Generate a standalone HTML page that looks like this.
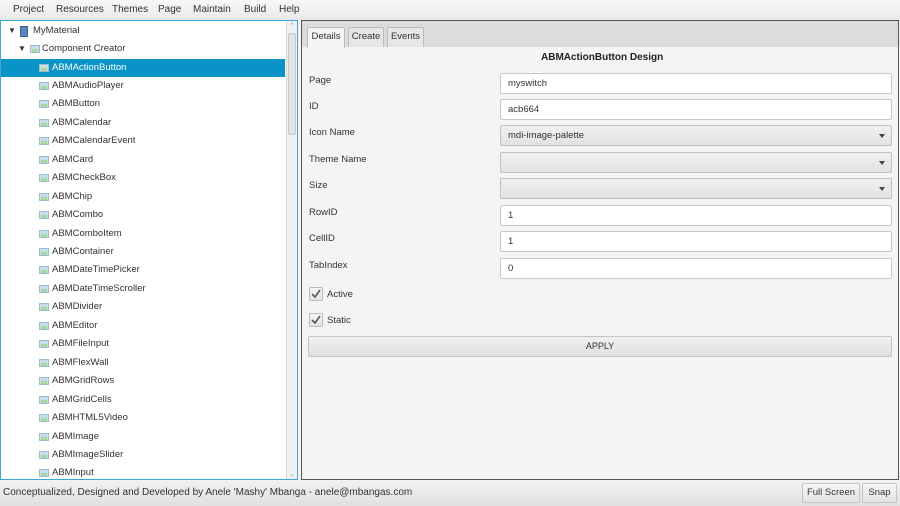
<!DOCTYPE html>
<html><head><meta charset="utf-8"><style>
*{box-sizing:border-box;margin:0;padding:0}
body{width:900px;height:506px;overflow:hidden;background:#f4f4f4;font-family:"Liberation Sans",sans-serif;font-size:10px;color:#333;position:relative}
.menu{position:absolute;left:0;top:0;width:900px;height:20px;background:linear-gradient(#f8f8f8,#e8e8e8);}
.menu span{position:absolute;top:4px;font-size:10px;color:#333}
.left{position:absolute;left:0;top:20px;width:298px;height:460px;background:#fff;border:1px solid #3ea8d8}
.row{position:absolute;left:0;width:284px;height:18px;line-height:18px;font-size:9.5px;color:#333}
.row.sel{background:#0993c6;color:#fff}
.ic{position:absolute;top:5px;width:10px;height:8px;background:#c7dde8;border:1px solid #9bbdd0}
.ic:after{content:"";position:absolute;left:1px;top:3px;width:6px;height:3px;background:#a8d8a0}
.sb{position:absolute;left:285px;top:0;width:11px;height:458px;background:#f0f0f0;border-left:1px solid #ddd}
.thumb{position:absolute;left:1px;top:12px;width:8px;height:102px;background:#e4e4e4;border:1px solid #c8c8c8;border-radius:2px}
.right{position:absolute;left:301px;top:20px;width:598px;height:460px;border:1px solid #555;background:#f4f4f4}
.tabbar{position:absolute;left:0;top:0;width:596px;height:26px;background:#dcdcdc}
.tab{position:absolute;top:6px;height:20px;border:1px solid #bbb;border-bottom:none;background:#e6e6e6;font-size:9.5px;line-height:18px;text-align:center;border-radius:2px 2px 0 0}
.lbl{position:absolute;left:7px;font-size:9.5px}
.inp{position:absolute;left:198px;width:392px;height:21px;background:#fff;border:1px solid #c8c8c8;border-radius:2px;font-size:9.5px;line-height:19px;padding-left:7px}
.cmb{background:linear-gradient(#f0f0f0,#e2e2e2);border-color:#c0c0c0}
.cmb:after{content:"";position:absolute;right:6px;top:8px;border-left:3.5px solid transparent;border-right:3.5px solid transparent;border-top:4px solid #444}
.chk{position:absolute;left:7px;width:14px;height:14px;border:1px solid #bbb;border-radius:2px;background:linear-gradient(#f4f4f4,#e4e4e4)}
.status{position:absolute;left:0;top:480px;width:900px;height:26px;background:linear-gradient(#f2f2f2,#e0e0e0)}
.btn{position:absolute;top:483px;height:20px;border:1px solid #c4c4c4;border-radius:2px;background:linear-gradient(#f6f6f6,#e4e4e4);font-size:9.5px;line-height:18px;text-align:center}
</style></head><body>
<div class="menu">
<span style="left:13px">Project</span><span style="left:56px">Resources</span><span style="left:112px">Themes</span><span style="left:158px">Page</span><span style="left:193px">Maintain</span><span style="left:244px">Build</span><span style="left:279px">Help</span>
</div>
<div class="left">
<div class="row" style="top:1px"><span style="position:absolute;left:7px;font-size:8px">▼</span><div style="position:absolute;left:19px;top:4px;width:8px;height:11px;background:#5c86b8;border:1px solid #3b6394"></div><span style="position:absolute;left:32px">MyMaterial</span></div>
<div class="row" style="top:19px"><span style="position:absolute;left:17px;font-size:8px">▼</span><div class="ic" style="left:29px"></div><span style="position:absolute;left:41px">Component Creator</span></div>
<div id="items"></div>
<div class="sb"><div style="position:absolute;top:1px;left:2px;font-size:7px;color:#999">⌃</div><div class="thumb"></div><div style="position:absolute;bottom:1px;left:2px;font-size:7px;color:#999">⌄</div></div>
</div>
<div class="right">
<div class="tabbar"></div>
<div class="tab" style="left:5px;width:38px;background:#f4f4f4;height:21px">Details</div>
<div class="tab" style="left:46px;width:36px">Create</div>
<div class="tab" style="left:85px;width:37px">Events</div>
<div style="position:absolute;left:239px;top:31px;font-weight:bold;font-size:10px;color:#222">ABMActionButton Design</div>
<div class="lbl" style="top:54px">Page</div><div class="inp" style="top:52px">myswitch</div>
<div class="lbl" style="top:80px">ID</div><div class="inp" style="top:78px">acb664</div>
<div class="lbl" style="top:106px">Icon Name</div><div class="inp cmb" style="top:104px">mdi-image-palette</div>
<div class="lbl" style="top:133px">Theme Name</div><div class="inp cmb" style="top:131px"></div>
<div class="lbl" style="top:159px">Size</div><div class="inp cmb" style="top:157px"></div>
<div class="lbl" style="top:186px">RowID</div><div class="inp" style="top:184px">1</div>
<div class="lbl" style="top:212px">CellID</div><div class="inp" style="top:210px">1</div>
<div class="lbl" style="top:239px">TabIndex</div><div class="inp" style="top:237px">0</div>
<div class="chk" style="top:266px"><svg width="12" height="12"><path d="M2 6 L5 9 L10 2" stroke="#555" stroke-width="1.6" fill="none"/></svg></div><div class="lbl" style="left:25px;top:268px">Active</div>
<div class="chk" style="top:292px"><svg width="12" height="12"><path d="M2 6 L5 9 L10 2" stroke="#555" stroke-width="1.6" fill="none"/></svg></div><div class="lbl" style="left:25px;top:294px">Static</div>
<div style="position:absolute;left:6px;top:315px;width:584px;height:21px;border:1px solid #c4c4c4;border-radius:2px;background:linear-gradient(#f0f0f0,#e0e0e0);text-align:center;line-height:19px;font-size:9px">APPLY</div>
</div>
<div class="status"><span style="position:absolute;left:3px;top:7px;font-size:10px">Conceptualized, Designed and Developed by Anele 'Mashy' Mbanga - anele@mbangas.com</span></div>
<div class="btn" style="left:802px;width:58px">Full Screen</div>
<div class="btn" style="left:862px;width:35px">Snap</div>
<script>
var n=["ABMActionButton","ABMAudioPlayer","ABMButton","ABMCalendar","ABMCalendarEvent","ABMCard","ABMCheckBox","ABMChip","ABMCombo","ABMComboItem","ABMContainer","ABMDateTimePicker","ABMDateTimeScroller","ABMDivider","ABMEditor","ABMFileInput","ABMFlexWall","ABMGridRows","ABMGridCells","ABMHTML5Video","ABMImage","ABMImageSlider","ABMInput"];
var h="";for(var i=0;i<n.length;i++){var t=37.5+i*18.45;h+='<div class="row'+(i==0?' sel':'')+'" style="top:'+t+'px"><div class="ic" style="left:38px"></div><span style="position:absolute;left:51px">'+n[i]+'</span></div>';}
document.getElementById("items").innerHTML=h;
</script>
</body></html>
